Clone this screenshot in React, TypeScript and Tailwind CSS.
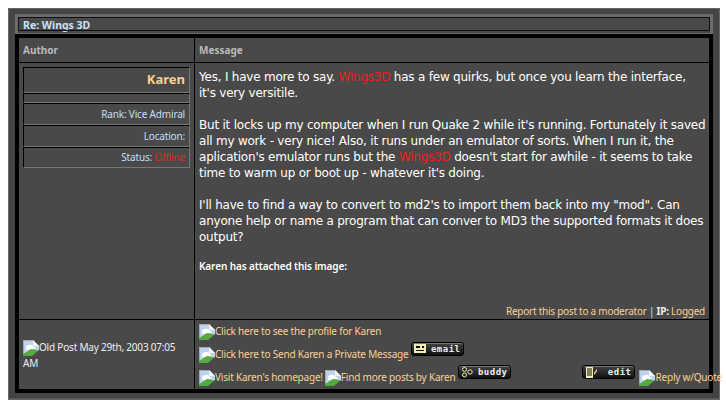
const Broken = () => (
  <svg width="16" height="16" viewBox="0 0 16 16" className="block shrink-0">
    <path d="M0 0H10L16 6V16H0Z" fill="#c4d7ee" />
    <path d="M0 0H10V1H1V15H0Z" fill="#a8a8a8" />
    <path d="M10 0L16 6H10Z" fill="#f4f4f4" />
    <path d="M1 1H10V6H15V11H1Z" fill="#bcd3f0" />
    <path d="M3 7C5 4 9 4 11 7L13 8L9 10H3Z" fill="#fff" />
    <path d="M0 16L0 14L8 9C11 9 14 10 16 11V16Z" fill="#56a840" />
    <path d="M9 16L16 10V16Z" fill="#4a4a4a" />
  </svg>
);

const Btn = ({ icon, label }: { icon: React.ReactNode; label: string }) => (
  <span
    className="flex items-center justify-between w-[53px] h-[14px] rounded-[3px] border border-black bg-gradient-to-b from-[#444] to-[#111] pl-[2px] pr-[3px] text-[9px] leading-none font-bold tracking-[0.5px] text-[#eee] shadow-[inset_0_1px_0_#777]"
    style={{ fontFamily: '"DejaVu Sans Mono", monospace' }}
  >
    {icon}
    <span>{label}</span>
  </span>
);

const MailIcon = () => (
  <svg width="12" height="10" viewBox="0 0 12 10"><path d="M0 0H12V9H0Z" fill="#f2eeb0" /><path d="M2 2H6V4H2ZM2 6H10V7H2ZM8 2H10V4H8Z" fill="#111" /></svg>
);
const BuddyIcon = () => (
  <svg width="12" height="11" viewBox="0 0 12 11" fill="#222" stroke="#f2eeb0" strokeWidth="1"><circle cx="3.5" cy="2.5" r="2" /><circle cx="3.5" cy="8" r="2" /><circle cx="9" cy="5" r="2.2" /></svg>
);
const EditIcon = () => (
  <svg width="12" height="11" viewBox="0 0 12 11"><path d="M1 0H8V11H1Z" fill="#f2eeb0" /><path d="M2 2H7M2 4H7M2 6H7M2 8H7" stroke="#111" /><path d="M9 6L12 2V4L9 8Z" fill="#f2eeb0" /></svg>
);

const Hi = ({ children }: { children: React.ReactNode }) => <span className="text-[#f01c1c]">{children}</span>;

const Cell = ({ className, children }: { className: string; children?: React.ReactNode }) => (
  <div className={`border border-t-black border-l-black border-r-[#777] border-b-[#777] flex items-center justify-end pr-[4px] text-[#c5dff5] ${className}`}>
    {children}
  </div>
);

const link = "text-[#fbd092] leading-[14px]";
const small = { fontFamily: '"Noto Sans", sans-serif' };

export default function App() {
  return (
    <div className="w-[726px] h-[409px] bg-white pt-[8px] pl-[8px]" style={{ fontFamily: '"DejaVu Sans", Verdana, sans-serif' }}>
      <div className="w-[712px] h-[392px] border border-[#666] bg-[#444] px-[6px] pt-[5px] pb-[6px] flex flex-col" style={{ boxShadow: "inset 0 -1px 0 #555" }}>
        <div className="h-[20px] border-[3px] border-[#6c6a6a] border-b-[1px] bg-[#494949] flex items-center pl-[5px] pt-[1px] text-[10.5px] font-bold text-[#c5e4fb] shrink-0 outline-1 -outline-offset-4 outline-[#111]" style={small}>
          Re: Wings 3D
        </div>
        <div className="flex-1 border-4 border-black bg-black flex flex-col gap-px min-h-0">
          <div className="h-[24px] flex gap-px shrink-0 text-[10px] font-bold text-[#b9b9b9]" style={small}>
            <div className="w-[175px] shrink-0 bg-[#494949] flex items-center px-[4px]">Author</div>
            <div className="flex-1 min-w-0 bg-[#494949] flex items-center px-[4px]">Message</div>
          </div>
          <div className="h-[256px] flex gap-px shrink-0">
            <div className="w-[175px] shrink-0 bg-[#494949] pt-[4px] px-[4px] flex flex-col text-[10px] tracking-[-0.17px]" style={small}>
              <Cell className="h-[26px]"><span className="text-[13px] font-bold tracking-normal text-[#fbd092]">Karen</span></Cell>
              <Cell className="h-[10px]" />
              <Cell className="h-[22px]">Rank: Vice Admiral</Cell>
              <Cell className="h-[22px]">Location:</Cell>
              <Cell className="h-[21px]"><span>Status:&nbsp;</span><Hi>Offline</Hi></Cell>
            </div>
            <div className="flex-1 min-w-0 bg-[#494949] px-[4px] pt-[6px] flex flex-col justify-between pb-[1px] text-white">
              <div className="text-[12px] leading-[16px] tracking-[-0.22px] whitespace-nowrap">
                <p>Yes, I have more to say. <Hi>Wings3D</Hi> has a few quirks, but once you learn the interface,<br />it's very versitile.</p>
                <p className="mt-[16px]">But it locks up my computer when I run Quake 2 while it's running. Fortunately it saved<br />all my work - very nice! Also, it runs under an emulator of sorts. When I run it, the<br />aplication's emulator runs but the <Hi>Wings3D</Hi> doesn't start for awhile - it seems to take<br />time to warm up or boot up - whatever it's doing.</p>
                <p className="mt-[16px]">I'll have to find a way to convert to md2's to import them back into my "mod". Can<br />anyone help or name a program that can conver to MD3 the supported formats it does<br />output?</p>
                <p className="mt-[14px] text-[10px] font-semibold leading-[14px] tracking-[-0.1px]" style={small}>Karen has attached this image:</p>
              </div>
              <div className="text-right text-[10px] leading-[14px] tracking-[-0.25px]" style={small}>
                <span className={link}>Report this post to a moderator</span>{" "}
                <span className="text-[#c5e4fb]">|</span> <span className="font-bold text-[#eee]">IP:</span> <span className={link}>Logged</span>
              </div>
            </div>
          </div>
          <div className="flex-1 flex gap-px min-h-0 text-[10px] tracking-[-0.2px]" style={small}>
            <div className="w-[175px] shrink-0 bg-[#494949] px-[4px] flex flex-col justify-center text-[#eee] leading-[14px]">
              <div className="flex items-start whitespace-nowrap"><Broken /><span>Old Post May 29th, 2003 07:05</span></div>
              <div>AM</div>
            </div>
            <div className="flex-1 min-w-0 bg-[#494949] pl-[4px] pt-[4px] flex flex-col gap-[7px] whitespace-nowrap">
              <div className="h-[16px] flex items-start"><Broken /><span className={link}>Click here to see the profile for Karen</span></div>
              <div className="h-[16px] flex items-start"><Broken /><span className={link}>Click here to Send Karen a Private Message</span><span className="ml-[3px] -mt-[5px]"><Btn icon={<MailIcon />} label="email" /></span></div>
              <div className="h-[16px] flex items-start"><Broken /><span className={link}>Visit Karen's homepage!</span><span className="ml-[2px]"><Broken /></span><span className={link}>Find more posts by Karen</span><span className="ml-[3px] -mt-[5px]"><Btn icon={<BuddyIcon />} label="buddy" /></span><span className="ml-[71px] -mt-[5px]"><Btn icon={<EditIcon />} label="edit" /></span><span className="ml-[4px]"><Broken /></span><span className={link}>Reply w/Quote</span></div>
            </div>
          </div>
        </div>
      </div>
    </div>
  );
}
